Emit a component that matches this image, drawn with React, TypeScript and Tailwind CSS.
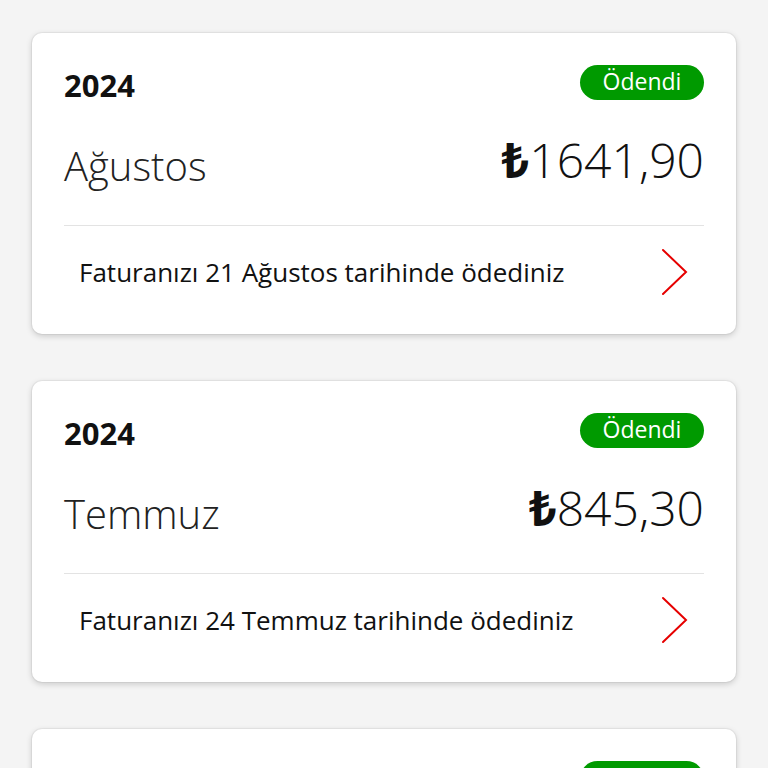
import React from "react";

type Bill = { year: string; month: string; amount: string; text: string };

const bills: Bill[] = [
  { year: "2024", month: "Ağustos", amount: "1641,90", text: "Faturanızı 21 Ağustos tarihinde ödediniz" },
  { year: "2024", month: "Temmuz", amount: "845,30", text: "Faturanızı 24 Temmuz tarihinde ödediniz" },
];

function Card({ b }: { b: Bill }) {
  return (
    <div className="bg-white rounded-[10px] shadow-[0_0_0_1px_rgba(0,0,0,0.04),0_2px_6px_rgba(0,0,0,0.18)] px-8 pt-8 shrink-0">
      <div className="flex items-center justify-between h-[35px]">
        <span className="text-[31px] font-bold text-[#111] leading-none mt-[6px]">{b.year}</span>
        <span className="h-[35px] w-[124px] rounded-full bg-[#009a00] text-white text-[23px] leading-none flex items-center justify-center pb-[3px]">
          Ödendi
        </span>
      </div>
      <div className="flex items-center justify-between h-[126px] border-b border-[#e3e3e3]">
        <span className="text-[40px] font-light text-[#222] leading-none mt-[6px]">{b.month}</span>
        <span className="text-[48px] font-light text-[#111] leading-none mt-[-6px]">
          <span className="font-bold">₺</span>
          {b.amount}
        </span>
      </div>
      <div className="flex items-center justify-between h-[108px] pl-[15px] pr-[14px] pb-[16px]">
        <span className="text-[26px] text-[#111] leading-none">{b.text}</span>
        <svg width="30" height="50" viewBox="0 0 30 50" fill="none">
          <path d="M3 3 L26 25 L3 47" stroke="#e60000" strokeWidth="2" strokeLinecap="round" strokeLinejoin="miter" />
        </svg>
      </div>
    </div>
  );
}

export default function App() {
  return (
    <div
      className="w-[768px] h-[768px] overflow-hidden bg-[#f4f4f4] px-8 pt-[33px] flex flex-col gap-[47px]"
      style={{ fontFamily: '"Open Sans", "Noto Sans", sans-serif' }}
    >
      {bills.map((b, i) => (
        <Card key={i} b={b} />
      ))}
      <div className="bg-white rounded-[10px] shadow-[0_0_0_1px_rgba(0,0,0,0.04),0_2px_6px_rgba(0,0,0,0.18)] px-8 pt-8 h-[120px] shrink-0">
        <div className="flex justify-end">
          <span className="h-[35px] w-[124px] rounded-full bg-[#009a00]" />
        </div>
      </div>
    </div>
  );
}
